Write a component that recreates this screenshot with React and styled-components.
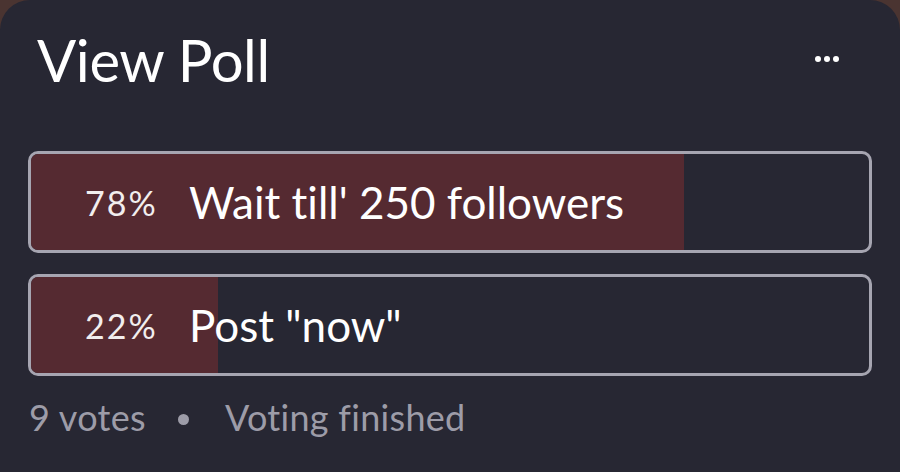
import React from 'react';
import styled, { createGlobalStyle } from 'styled-components';

const GlobalStyle = createGlobalStyle`
  html, body {
    margin: 0;
    padding: 0;
    background: #4a3431;
  }
  body {
    font-family: Lato, "Open Sans", sans-serif;
  }
`;

const options = [
  { id: 1, percent: 78, label: "Wait till' 250 followers", fill: 653 },
  { id: 2, percent: 22, label: 'Post "now"', fill: 187 },
];

const App = () => {
  return (
    <>
      <GlobalStyle />
      <Card>
        <Header>
          <Title>View Poll</Title>
          <MoreButton aria-label="more">
            <Dot />
            <Dot />
            <Dot />
          </MoreButton>
        </Header>
        <Options>
          {options.map(option => (
            <Option key={option.id}>
              <Fill style={{ width: option.fill }} />
              <Percent>{option.percent}%</Percent>
              <Label>{option.label}</Label>
            </Option>
          ))}
        </Options>
        <Footer>
          <span>9 votes</span>
          <Separator />
          <span>Voting finished</span>
        </Footer>
      </Card>
    </>
  );
};

export default App;

const Card = styled.div`
  width: 900px;
  height: 472px;
  box-sizing: border-box;
  background: #272733;
  border-radius: 30px 30px 0 0;
  padding: 22px 28px 0 28px;
  overflow: hidden;
`;

const Header = styled.header`
  display: flex;
  align-items: center;
  justify-content: space-between;
  height: 76px;
  padding-left: 9px;
`;

const Title = styled.h1`
  margin: 0;
  font-size: 58px;
  font-weight: 400;
  color: #fff;
  letter-spacing: -0.4px;
  line-height: 1;
`;

const MoreButton = styled.div`
  display: flex;
  gap: 3px;
  margin-right: 33px;
  margin-bottom: 2px;
`;

const Dot = styled.span`
  width: 6px;
  height: 6px;
  border-radius: 50%;
  background: #fff;
`;

const Options = styled.div`
  display: flex;
  flex-direction: column;
  gap: 21px;
  margin-top: 53px;
`;

const Option = styled.div`
  position: relative;
  display: flex;
  align-items: center;
  height: 102px;
  box-sizing: border-box;
  border: 3px solid #a6a5b1;
  border-radius: 10px;
  overflow: hidden;
`;

const Fill = styled.div`
  position: absolute;
  top: 0;
  left: 0;
  bottom: 0;
  background: #552a31;
`;

const Percent = styled.span`
  position: relative;
  width: 104px;
  margin-left: 54px;
  font-size: 34px;
  color: #f2eeee;
  letter-spacing: 2px;
`;

const Label = styled.span`
  position: relative;
  font-size: 44px;
  color: #fff;
  letter-spacing: 0;
  font-variant-ligatures: none;
`;

const Footer = styled.div`
  display: flex;
  align-items: center;
  margin-top: 19px;
  padding-left: 1px;
  font-size: 36px;
  color: #9d9ca8;
  letter-spacing: 0.3px;
`;

const Separator = styled.span`
  width: 11px;
  height: 11px;
  border-radius: 50%;
  background: #9d9ca8;
  margin: 4px 36px 0 32px;
`;
